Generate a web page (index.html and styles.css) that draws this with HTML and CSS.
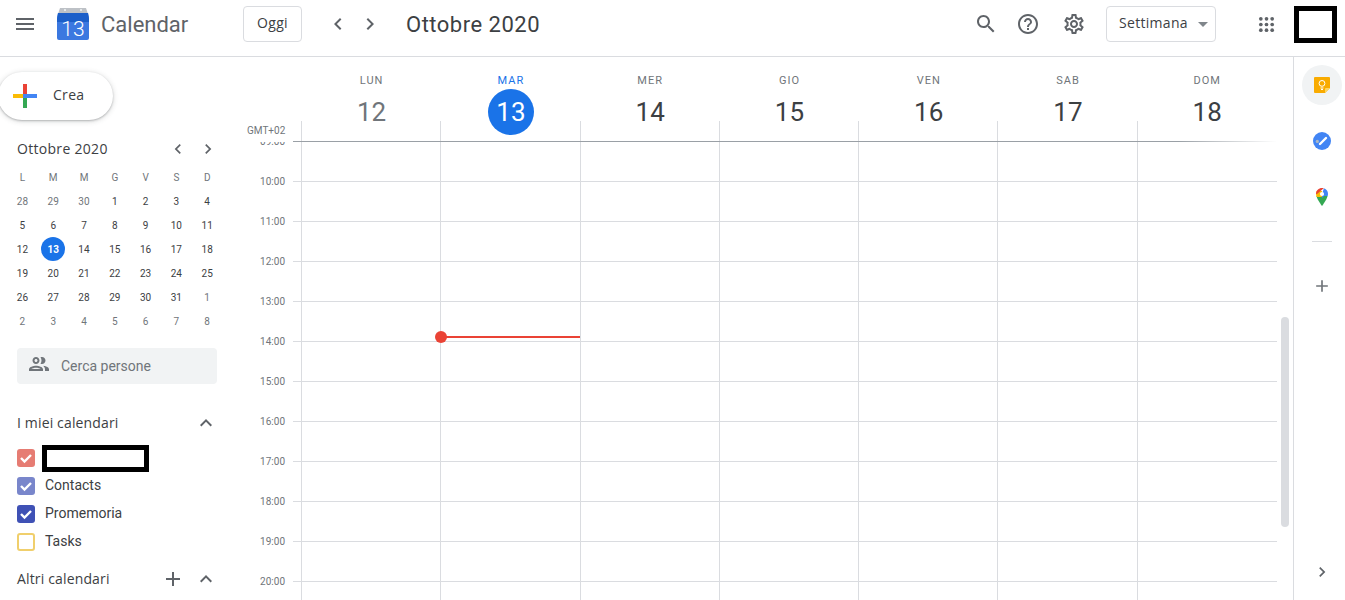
FILE: index.html
```html
<!DOCTYPE html>
<html lang="it">
<head>
  <meta charset="UTF-8" />
  <title>Calendar - Ottobre 2020</title>
  <meta name="viewport" content="width=device-width, initial-scale=1.0" />
  <link rel="stylesheet" href="styles.css">
</head>
<body>
  <header class="topbar">
    <div class="brand">
      <svg class="icon" viewBox="0 0 24 24"><path d="M3 18h18v-2H3v2zm0-5h18v-2H3v2zm0-7v2h18V6H3z"/></svg>
      <svg class="logo" viewBox="0 0 32 32">
        <path d="M3 0h26l2 6H1z" fill="#bdc1c6"/>
        <circle cx="8" cy="2" r="1" fill="#f1f3f4"/>
        <circle cx="24" cy="2" r="1" fill="#f1f3f4"/>
        <path d="M1 5h30l1 5v20a2 2 0 0 1-2 2H2a2 2 0 0 1-2-2V10z" fill="#3b78e0"/>
        <path d="M1 5h30l1 6v3H0v-3z" fill="#1c5fc9"/>
        <text class="logo-num" x="16" y="27.5" text-anchor="middle">13</text>
      </svg>
      <span class="brand-name">Calendar</span>
    </div>
    <button class="outline-btn today">Oggi</button>
    <svg class="icon nav-prev" viewBox="0 0 24 24"><path d="M15.41 7.41L14 6l-6 6 6 6 1.41-1.41L10.83 12z"/></svg>
    <svg class="icon nav-next" viewBox="0 0 24 24"><path d="M10 6L8.59 7.41 13.17 12l-4.58 4.59L10 18l6-6z"/></svg>
    <h1 class="period">Ottobre 2020</h1>
    <div class="topbar-right">
      <svg class="icon" viewBox="0 0 24 24"><path d="M15.5 14h-.79l-.28-.27C15.41 12.59 16 11.11 16 9.5 16 5.91 13.09 3 9.5 3S3 5.91 3 9.5 5.91 16 9.5 16c1.61 0 3.09-.59 4.23-1.57l.27.28v.79l5 4.99L20.49 19l-4.99-5zm-6 0C7.01 14 5 11.99 5 9.5S7.01 5 9.5 5 14 7.01 14 9.5 11.99 14 9.5 14z"/></svg>
      <svg class="icon help" viewBox="0 0 24 24"><path d="M11 18h2v-2h-2v2zm1-16C6.48 2 2 6.48 2 12s4.48 10 10 10 10-4.48 10-10S17.52 2 12 2zm0 18c-4.41 0-8-3.59-8-8s3.59-8 8-8 8 3.59 8 8-3.59 8-8 8zm0-14c-2.21 0-4 1.79-4 4h2c0-1.1.9-2 2-2s2 .9 2 2c0 2-3 1.75-3 5h2c0-2.25 3-2.5 3-5 0-2.21-1.79-4-4-4z"/></svg>
      <svg class="icon gear" viewBox="0 0 24 24"><path d="M19.43 12.98c.04-.32.07-.64.07-.98 0-.34-.03-.66-.07-.98l2.11-1.65c.19-.15.24-.42.12-.64l-2-3.46c-.09-.16-.26-.25-.44-.25-.06 0-.12.01-.17.03l-2.49 1c-.52-.4-1.08-.73-1.69-.98l-.38-2.65C14.46 2.18 14.25 2 14 2h-4c-.25 0-.46.18-.49.42l-.38 2.65c-.61.25-1.17.59-1.69.98l-2.49-1c-.06-.02-.12-.03-.18-.03-.17 0-.34.09-.43.25l-2 3.46c-.13.22-.07.49.12.64l2.11 1.65c-.04.32-.07.65-.07.98 0 .33.03.66.07.98l-2.11 1.65c-.19.15-.24.42-.12.64l2 3.46c.09.16.26.25.44.25.06 0 .12-.01.17-.03l2.49-1c.52.4 1.08.73 1.69.98l.38 2.65c.03.24.24.42.49.42h4c.25 0 .46-.18.49-.42l.38-2.65c.61-.25 1.17-.59 1.69-.98l2.49 1c.06.02.12.03.18.03.17 0 .34-.09.43-.25l2-3.46c.12-.22.07-.49-.12-.64l-2.11-1.65zm-1.98-1.71c.04.31.05.52.05.73 0 .21-.02.43-.05.73l-.14 1.13.89.7 1.08.84-.7 1.21-1.27-.51-1.04-.42-.9.68c-.43.32-.84.56-1.25.73l-1.06.43-.16 1.13-.2 1.35h-1.4l-.19-1.35-.16-1.13-1.06-.43c-.43-.18-.83-.41-1.23-.71l-.91-.7-1.06.43-1.27.51-.7-1.21 1.08-.84.89-.7-.14-1.13c-.03-.31-.05-.54-.05-.74s.02-.43.05-.73l.14-1.13-.89-.7-1.08-.84.7-1.21 1.27.51 1.04.42.9-.68c.43-.32.84-.56 1.25-.73l1.06-.43.16-1.13.2-1.35h1.39l.19 1.35.16 1.13 1.06.43c.43.18.83.41 1.23.71l.91.7 1.06-.43 1.27-.51.7 1.21-1.07.85-.89.7.14 1.13zM12 8c-2.21 0-4 1.79-4 4s1.79 4 4 4 4-1.79 4-4-1.79-4-4-4zm0 6c-1.1 0-2-.9-2-2s.9-2 2-2 2 .9 2 2-.9 2-2 2z"/></svg>
      <button class="outline-btn view-select">Settimana<span class="caret"></span></button>
      <svg class="icon apps" viewBox="0 0 24 24">
        <circle cx="4" cy="4" r="2.6"/><circle cx="12" cy="4" r="2.6"/><circle cx="20" cy="4" r="2.6"/>
        <circle cx="4" cy="12" r="2.6"/><circle cx="12" cy="12" r="2.6"/><circle cx="20" cy="12" r="2.6"/>
        <circle cx="4" cy="20" r="2.6"/><circle cx="12" cy="20" r="2.6"/><circle cx="20" cy="20" r="2.6"/>
      </svg>
      <div class="redacted account"></div>
    </div>
  </header>

  <div class="layout">
    <aside class="sidebar">
      <button class="create">
        <svg class="create-plus" viewBox="0 0 24 24">
          <rect x="10" y="0" width="4" height="10" fill="#ea4335"/>
          <rect x="14" y="10" width="10" height="4" fill="#4285f4"/>
          <rect x="10" y="14" width="4" height="10" fill="#34a853"/>
          <rect x="0" y="10" width="10" height="4" fill="#fbbc04"/>
          <rect x="10" y="10" width="4" height="4" fill="#4285f4"/>
        </svg>
        <span>Crea</span>
      </button>

      <div class="mini-head">
        <span class="mini-title">Ottobre 2020</span>
        <svg class="icon small" viewBox="0 0 24 24"><path d="M15.41 7.41L14 6l-6 6 6 6 1.41-1.41L10.83 12z"/></svg>
        <svg class="icon small mini-next" viewBox="0 0 24 24"><path d="M10 6L8.59 7.41 13.17 12l-4.58 4.59L10 18l6-6z"/></svg>
      </div>
      <div class="mini-grid">
        <span class="dow">L</span><span class="dow">M</span><span class="dow">M</span><span class="dow">G</span><span class="dow">V</span><span class="dow">S</span><span class="dow">D</span>
        <span class="off">28</span><span class="off">29</span><span class="off">30</span><span>1</span><span>2</span><span>3</span><span>4</span>
        <span>5</span><span>6</span><span>7</span><span>8</span><span>9</span><span>10</span><span>11</span>
        <span>12</span><span class="sel">13</span><span>14</span><span>15</span><span>16</span><span>17</span><span>18</span>
        <span>19</span><span>20</span><span>21</span><span>22</span><span>23</span><span>24</span><span>25</span>
        <span>26</span><span>27</span><span>28</span><span>29</span><span>30</span><span>31</span><span class="off">1</span>
        <span class="off">2</span><span class="off">3</span><span class="off">4</span><span class="off">5</span><span class="off">6</span><span class="off">7</span><span class="off">8</span>
      </div>

      <div class="people">
        <svg class="icon" viewBox="0 0 24 24"><path d="M9 13.75c-2.34 0-7 1.17-7 3.5V19h14v-1.75c0-2.33-4.66-3.5-7-3.5zM4.34 17c.84-.58 2.87-1.25 4.66-1.25s3.82.67 4.66 1.25H4.34zM9 12c1.93 0 3.5-1.57 3.5-3.5S10.93 5 9 5 5.5 6.57 5.5 8.5 7.07 12 9 12zm0-5c.83 0 1.5.67 1.5 1.5S9.83 10 9 10s-1.5-.67-1.5-1.5S8.17 7 9 7zm7.04 6.81c1.16.84 1.96 1.96 1.96 3.44V19h4v-1.75c0-2.02-3.5-3.17-5.96-3.44zM15 12c1.93 0 3.5-1.57 3.5-3.5S16.93 5 15 5c-.54 0-1.04.13-1.5.35.63.89 1 1.98 1 3.15s-.37 2.26-1 3.15c.46.22.96.35 1.5.35z"/></svg>
        <span>Cerca persone</span>
      </div>

      <div class="section-head mine">
        <span>I miei calendari</span>
        <svg class="icon" viewBox="0 0 24 24"><path d="M12 8l-6 6 1.41 1.41L12 10.83l4.59 4.58L18 14z"/></svg>
      </div>
      <ul class="cal-list">
        <li>
          <span class="check tomato"><svg viewBox="0 0 18 18"><path d="M4 9l3.5 3.5L14 6" /></svg></span>
          <div class="redacted cal-name"></div>
        </li>
        <li>
          <span class="check periwinkle"><svg viewBox="0 0 18 18"><path d="M4 9l3.5 3.5L14 6" /></svg></span>
          <span class="cal-label">Contacts</span>
        </li>
        <li>
          <span class="check indigo"><svg viewBox="0 0 18 18"><path d="M4 9l3.5 3.5L14 6" /></svg></span>
          <span class="cal-label">Promemoria</span>
        </li>
        <li>
          <span class="check empty"></span>
          <span class="cal-label">Tasks</span>
        </li>
      </ul>
      <div class="section-head others">
        <span>Altri calendari</span>
        <svg class="icon add" viewBox="0 0 24 24"><path d="M19 13h-6v6h-2v-6H5v-2h6V5h2v6h6v2z"/></svg>
        <svg class="icon" viewBox="0 0 24 24"><path d="M12 8l-6 6 1.41 1.41L12 10.83l4.59 4.58L18 14z"/></svg>
      </div>
    </aside>

    <main class="week">
      <div class="week-head">
        <div class="gmt">GMT+02</div>
        <div class="day-head past"><span class="dow-name">LUN</span><span class="day-num">12</span></div>
        <div class="day-head today-col"><span class="dow-name">MAR</span><span class="day-num">13</span></div>
        <div class="day-head"><span class="dow-name">MER</span><span class="day-num">14</span></div>
        <div class="day-head"><span class="dow-name">GIO</span><span class="day-num">15</span></div>
        <div class="day-head"><span class="dow-name">VEN</span><span class="day-num">16</span></div>
        <div class="day-head"><span class="dow-name">SAB</span><span class="day-num">17</span></div>
        <div class="day-head"><span class="dow-name">DOM</span><span class="day-num">18</span></div>
      </div>
      <div class="head-line"></div>
      <div class="week-body">
        <div class="hours">
          <span>09:00</span><span>10:00</span><span>11:00</span><span>12:00</span><span>13:00</span><span>14:00</span><span>15:00</span>
          <span>16:00</span><span>17:00</span><span>18:00</span><span>19:00</span><span>20:00</span>
        </div>
        <div class="day-col"></div>
        <div class="day-col now-col"><div class="now-line"></div></div>
        <div class="day-col"></div>
        <div class="day-col"></div>
        <div class="day-col"></div>
        <div class="day-col"></div>
        <div class="day-col"></div>
        <div class="scroll-thumb"></div>
      </div>
    </main>

    <nav class="addons">
      <div class="addon keep">
        <svg viewBox="0 0 16 16" class="addon-keep">
          <path d="M1 0h14a1 1 0 0 1 1 1v10l-5 5H1a1 1 0 0 1-1-1V1a1 1 0 0 1 1-1z" fill="#f9ab00"/>
          <path d="M11 16v-4a1 1 0 0 1 1-1h4z" fill="#fdd663"/>
          <circle cx="8" cy="6.4" r="2.9" fill="none" stroke="#fff" stroke-width="1"/>
          <path d="M6.5 11h3M7 12.5h2" stroke="#fff" stroke-width="1"/>
        </svg>
      </div>
      <div class="addon">
        <svg viewBox="0 0 18 18" class="addon-tasks">
          <circle cx="9" cy="9" r="9" fill="#4285f4"/>
          <circle cx="4.3" cy="9.4" r="1.6" fill="#aab7c4"/>
          <path d="M7 12l6-6" stroke="#fff" stroke-width="2.4" stroke-linecap="round"/>
        </svg>
      </div>
      <div class="addon">
        <svg viewBox="0 0 12 18" class="addon-maps">
          <clipPath id="pin"><path d="M6 0C2.7 0 0 2.6 0 5.9 0 10 6 18 6 18s6-8 6-12.1C12 2.6 9.3 0 6 0z"/></clipPath>
          <g clip-path="url(#pin)">
            <rect x="0" y="8" width="12" height="10" fill="#34a853"/>
            <rect x="0" y="3" width="6" height="6" fill="#fbbc04"/>
            <path d="M0 0h8L1 6H0z" fill="#ea4335"/>
            <path d="M8 0h4v8H8l-2 2 0-4z" fill="#4285f4"/>
            <circle cx="6" cy="6" r="2.1" fill="#fff"/>
          </g>
        </svg>
      </div>
      <div class="addons-sep"></div>
      <svg class="icon addon-add" viewBox="0 0 24 24"><path d="M19 13h-6v6h-2v-6H5v-2h6V5h2v6h6v2z"/></svg>
      <svg class="icon addons-toggle" viewBox="0 0 24 24"><path d="M10 6L8.59 7.41 13.17 12l-4.58 4.59L10 18l6-6z"/></svg>
    </nav>
  </div>
</body>
</html>
```

FILE: styles.css
```css
* {
  box-sizing: border-box;
}

html, body {
  height: 100%;
}

body {
  margin: 0;
  background: #fff;
  color: #3c4043;
  font-family: 'Roboto', 'Liberation Sans', sans-serif;
  overflow: hidden;
}

.icon {
  width: 24px;
  height: 24px;
  flex: none;
  fill: #5f6368;
}

.icon.small {
  width: 20px;
  height: 20px;
}

.redacted {
  background: #fff;
  border: 5px solid #000;
}

/* top bar */
.topbar {
  display: flex;
  align-items: center;
  height: 57px;
  padding: 0 8px 8px 13px;
  border-bottom: 1px solid #dadce0;
}

.brand {
  display: flex;
  align-items: center;
  width: 230px;
  flex: none;
}

.logo {
  width: 32px;
  height: 32px;
  margin-left: 20px;
}

.logo-num {
  fill: #fff;
  font-family: 'Roboto', sans-serif;
  font-size: 21px;
  font-weight: 300;
}

.brand-name {
  margin-left: 12px;
  font-size: 22px;
  color: #5f6368;
}

.outline-btn {
  height: 36px;
  background: #fff;
  border: 1px solid #dadce0;
  border-radius: 4px;
  color: #3c4043;
  font-family: 'Open Sans', sans-serif;
  font-size: 14px;
  font-weight: 400;
  letter-spacing: .3px;
}

.today {
  width: 59px;
  padding: 0 0 4px;
}

.nav-prev {
  margin-left: 24px;
}

.nav-next {
  margin-left: 8px;
}

.period {
  margin: 0 0 0 24px;
  font-size: 22px;
  font-weight: 400;
  letter-spacing: .5px;
}

.topbar-right {
  display: flex;
  align-items: center;
  margin-left: auto;
}

.help {
  margin-left: 18px;
}

.gear {
  margin-left: 22px;
}

.view-select {
  display: flex;
  align-items: center;
  width: 110px;
  margin-left: 20px;
  padding: 0 0 4px 12px;
}

.caret {
  margin: 4px 0 0 10px;
  border-left: 5px solid transparent;
  border-right: 5px solid transparent;
  border-top: 5px solid #80868b;
}

.apps {
  width: 17px;
  height: 17px;
  margin-left: 42px;
}

.account {
  width: 43px;
  height: 37px;
  margin-left: 19px;
}

/* page body */
.layout {
  display: flex;
  height: calc(100% - 57px);
}

.sidebar {
  width: 247px;
  flex: none;
  padding-top: 15px;
  overflow: hidden;
}

.create {
  display: flex;
  align-items: center;
  width: 115px;
  height: 48px;
  margin-left: -2px;
  padding: 0 0 0 15px;
  background: #fff;
  border: none;
  border-radius: 24px;
  box-shadow: 0 1px 2px rgba(60, 64, 67, .3), 0 1px 5px 1px rgba(60, 64, 67, .15);
  color: #3c4043;
  font-family: 'Open Sans', sans-serif;
  font-size: 14px;
  font-weight: 400;
  letter-spacing: .3px;
}

.create span {
  margin-top: -4px;
}

.create-plus {
  width: 24px;
  height: 24px;
  margin-right: 16px;
}

.mini-head {
  display: flex;
  align-items: center;
  height: 24px;
  margin-top: 17px;
  padding: 0 29px 0 17px;
}

.mini-title {
  flex: 1;
  margin-top: -2px;
  font-family: 'Open Sans', sans-serif;
  font-size: 14px;
  letter-spacing: .3px;
}

.mini-next {
  margin-left: 10px;
}

.mini-grid {
  display: grid;
  grid-template-columns: repeat(7, 30.8px);
  grid-auto-rows: 24px;
  margin: 4px 0 0 7px;
  font-size: 10px;
  text-align: center;
}

.mini-grid span {
  display: flex;
  align-items: center;
  justify-content: center;
  color: #3c4043;
}

.mini-grid .dow, .mini-grid .off {
  color: #70757a;
}

.mini-grid .sel {
  width: 24px;
  margin-left: 3.4px;
  background: #1a73e8;
  border-radius: 50%;
  color: #fff;
  font-weight: 700;
}

.people {
  display: flex;
  align-items: center;
  gap: 10px;
  width: 200px;
  height: 36px;
  margin: 15px 0 0 17px;
  padding-left: 10px;
  background: #f1f3f4;
  border-radius: 4px;
  color: #70757a;
  font-size: 14px;
}

.people .icon {
  fill: #70757a;
  margin-top: -4px;
}

.section-head {
  display: flex;
  align-items: center;
  height: 24px;
  padding: 0 29px 0 17px;
  font-family: 'Open Sans', sans-serif;
  font-size: 14px;
  letter-spacing: .15px;
}

.section-head span {
  flex: 1;
  margin-top: -2px;
}

.section-head.mine {
  margin-top: 27px;
}

.section-head.others {
  margin-top: 11px;
}

.add {
  margin-right: 9px;
}

.cal-list {
  list-style: none;
  margin: 9px 0 0;
  padding: 0 0 0 17px;
}

.cal-list li {
  display: flex;
  align-items: center;
  gap: 10px;
  height: 28px;
  font-size: 14px;
}

.cal-label {
  margin-top: -2px;
}

.check {
  display: block;
  width: 18px;
  height: 18px;
  flex: none;
  border-radius: 3px;
}

.check svg {
  display: block;
  fill: none;
  stroke: #fff;
  stroke-width: 2.4;
}

.tomato {
  background: #e67c73;
}

.periwinkle {
  background: #7986cb;
}

.indigo {
  background: #3f51b5;
}

.empty {
  border: 2px solid #f0cf6c;
}

.cal-name {
  width: 107px;
  height: 27px;
  margin-left: -3px;
}

/* week view */
.week {
  display: flex;
  flex-direction: column;
  width: 1046px;
  flex: none;
}

.week-head {
  display: grid;
  grid-template-columns: 54px repeat(7, 139.28px);
  height: 84px;
  flex: none;
}

.gmt {
  align-self: end;
  padding: 0 16px 5px 0;
  color: #70757a;
  font-size: 10px;
  text-align: right;
}

.day-head {
  display: flex;
  flex-direction: column;
  align-items: center;
  padding: 17px 0 0 2px;
  background: linear-gradient(#dadce0, #dadce0) left bottom / 1px 20px no-repeat;
}

.dow-name {
  color: #70757a;
  font-size: 11px;
  letter-spacing: 1px;
  line-height: 14px;
}

.day-num {
  display: flex;
  align-items: center;
  justify-content: center;
  width: 46px;
  height: 46px;
  margin-top: 1px;
  border-radius: 50%;
  font-size: 26px;
}

.past .day-num {
  color: #70757a;
}

.today-col .dow-name {
  color: #1a73e8;
}

.today-col .day-num {
  background: #1a73e8;
  color: #fff;
}

.head-line {
  height: 1px;
  flex: none;
  margin: 0 16px 0 46px;
  background: linear-gradient(to right, #9aa0a6 90%, #fff);
}

.week-body {
  position: relative;
  display: grid;
  grid-template-columns: 54px repeat(7, 139.28px);
  flex: 1;
  overflow: hidden;
  background: repeating-linear-gradient(to bottom, transparent 0 39px, #dadce0 39px 40px) no-repeat 46px 0 / 984px 100%;
}

.hours {
  display: flex;
  flex-direction: column;
  margin-top: -20px;
  padding-right: 16px;
  color: #70757a;
  font-size: 10px;
  text-align: right;
}

.hours span {
  flex: none;
  height: 40px;
  line-height: 40px;
}

.day-col {
  border-left: 1px solid #dadce0;
}

.now-col {
  position: relative;
}

.now-line {
  position: absolute;
  top: 194px;
  left: 0;
  right: 0;
  height: 2px;
  background: #ea4335;
}

.now-line::before {
  content: "";
  position: absolute;
  top: -5px;
  left: -6px;
  width: 12px;
  height: 12px;
  background: #ea4335;
  border-radius: 50%;
}

.scroll-thumb {
  position: absolute;
  top: 175px;
  left: 1034px;
  width: 8px;
  height: 210px;
  background: #dadce0;
  border-radius: 4px;
}

/* right add-on panel */
.addons {
  display: flex;
  flex-direction: column;
  align-items: center;
  flex: 1;
  padding: 8px 0 18px 5px;
  border-left: 1px solid #dadce0;
}

.addon {
  display: flex;
  align-items: center;
  justify-content: center;
  width: 40px;
  height: 40px;
  flex: none;
  margin-bottom: 16px;
  border-radius: 50%;
}

.keep {
  background: #f1f3f4;
}

.addon-keep {
  width: 16px;
  height: 16px;
}

.addon-tasks {
  width: 18px;
  height: 18px;
}

.addon-maps {
  width: 12px;
  height: 18px;
}

.addons-sep {
  width: 20px;
  height: 1px;
  flex: none;
  margin-top: 8px;
  background: #dadce0;
}

.addon-add {
  width: 20px;
  height: 20px;
  margin-top: 34px;
  fill: #70757a;
}

.addons-toggle {
  width: 20px;
  height: 20px;
  margin-top: auto;
}
```
